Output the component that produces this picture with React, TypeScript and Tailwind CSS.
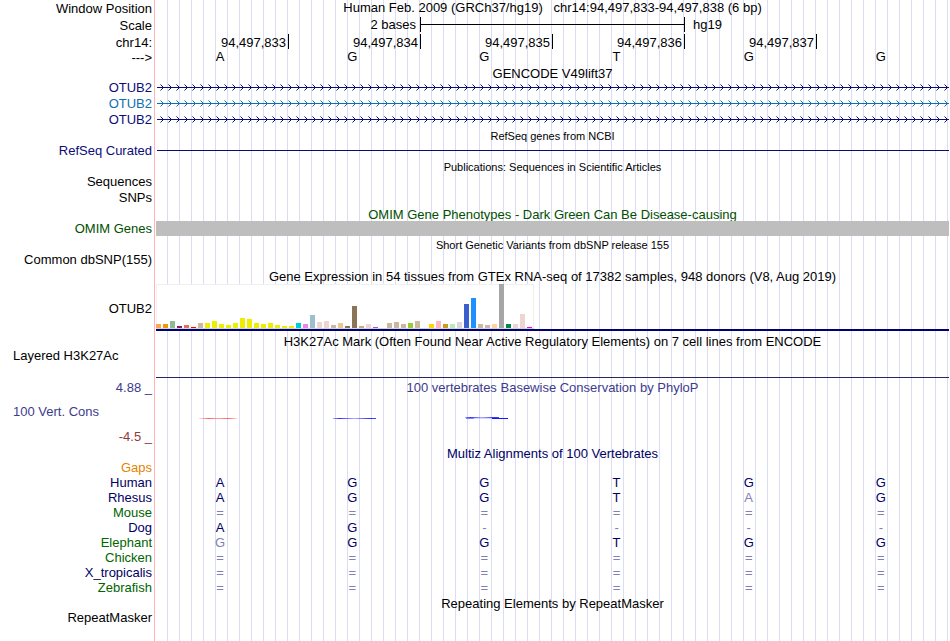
import type { ReactNode } from 'react'
import clsx from 'clsx'

interface TrackRowProps {
  label?: string
  className?: string
  labelClassName?: string
  children?: ReactNode
}

function TrackRow({ label, className = 'h-4 leading-4', labelClassName, children }: TrackRowProps) {
  return (
    <div className={clsx('flex', className)}>
      <div className={clsx('w-[156px] shrink-0 whitespace-nowrap pr-1 text-right', labelClassName)}>
        {label}
      </div>
      <div className="min-w-0 flex-1">{children}</div>
    </div>
  )
}

interface TrackTitleProps {
  className?: string
  children: ReactNode
}

function TrackTitle({ className = 'h-4 leading-[18px]', children }: TrackTitleProps) {
  return (
    <h2 className={clsx('ml-[156px] whitespace-pre text-center', className)}>{children}</h2>
  )
}

const positions = ['94,497,833', '94,497,834', '94,497,835', '94,497,836', '94,497,837', '']
const bases = ['A', 'G', 'G', 'T', 'G', 'G']

const transcripts = [
  { id: 'tx1', color: '#0c0c78', labelClassName: 'text-[#0c0c78]' },
  { id: 'tx2', color: '#0f6fb0', labelClassName: 'text-[#0f6fb0]' },
  { id: 'tx3', color: '#0c0c78', labelClassName: 'text-[#0c0c78]' },
]

function StrandArrows({ id, color }: { id: string; color: string }) {
  return (
    <svg className="block h-[15px] w-full" shapeRendering="crispEdges">
      <defs>
        <pattern id={id} x="4" width="8" height="15" patternUnits="userSpaceOnUse">
          <g fill={color}>
            <rect x="0" y="4" width="1" height="1" opacity="0.5" />
            <rect x="1" y="5" width="1" height="1" />
            <rect x="2" y="6" width="1" height="1" />
            <rect x="3" y="7" width="1" height="1" />
            <rect x="2" y="8" width="1" height="1" />
            <rect x="1" y="9" width="1" height="1" />
            <rect x="0" y="10" width="1" height="1" opacity="0.5" />
          </g>
        </pattern>
      </defs>
      <rect x="1" width="100%" height="15" fill={`url(#${id})`} />
      <rect x="1" y="7" width="100%" height="1" fill={color} />
    </svg>
  )
}

// [height in px, tissue color]
const tissues: [number, string][] = [
  [4, '#ffa54f'], [4, '#ee9a00'], [7, '#8fbc8f'], [2, '#8b1c62'], [3, '#ee6a50'], [1, '#ff0000'],
  [5, '#cdb79e'], [5, '#eeee00'], [7, '#eeee00'], [4, '#eeee00'], [3, '#eeee00'], [5, '#eeee00'],
  [10, '#eeee00'], [9, '#eeee00'], [5, '#eeee00'], [4, '#eeee00'], [5, '#eeee00'], [3, '#eeee00'],
  [2, '#eeee00'], [2, '#eeee00'], [5, '#00cdcd'], [4, '#ee82ee'], [13, '#9ac0cd'], [6, '#eed5d2'],
  [7, '#eed5d2'], [3, '#cdb79e'], [5, '#eec591'], [2, '#8b7355'], [22, '#8b7355'], [2, '#cdaa7d'],
  [4, '#eed5d2'], [1, '#b452cd'], [0, '#7a378b'], [5, '#cdb79e'], [6, '#cdb79e'], [4, '#cdb79e'],
  [5, '#9acd32'], [7, '#cdb79e'], [0, '#7a67ee'], [4, '#ffd700'], [7, '#ffb6c1'], [4, '#cd9b1d'],
  [4, '#b4eeb4'], [6, '#d9d9d9'], [24, '#3a5fcd'], [30, '#1e90ff'], [4, '#cdb79e'], [3, '#cdb79e'],
  [4, '#ffd39b'], [44, '#a6a6a6'], [4, '#008b45'], [4, '#eed5d2'], [14, '#eed5d2'], [1, '#ff00ff'],
]

function ExpressionChart() {
  return (
    <div className="h-[47px] border-b-2 border-[#000073]">
      <svg className="block h-[45px] w-[378px]" shapeRendering="crispEdges">
        <rect width="378" height="45" fill="#f0f0f0" />
        <rect x="1" y="1" width="376" height="43" fill="#ffffff" />
        <rect y="44" width="378" height="1" fill="#d4d4d4" />
        {tissues.map(([height, color], i) => (
          <rect key={i} x={i * 7} y={44 - height} width="5" height={height} fill={color} />
        ))}
      </svg>
    </div>
  )
}

function ConservationPlot() {
  return (
    <svg className="block h-4 w-full" viewBox="0 0 793 16" preserveAspectRatio="none">
      <defs>
        <linearGradient id="neg">
          <stop offset="0" stopColor="#ff6464" stopOpacity="0.2" />
          <stop offset="0.25" stopColor="#ff6464" />
          <stop offset="0.5" stopColor="#ff6464" stopOpacity="0.6" />
          <stop offset="0.75" stopColor="#ff6464" />
          <stop offset="1" stopColor="#ff6464" stopOpacity="0.1" />
        </linearGradient>
        <linearGradient id="pos">
          <stop offset="0" stopColor="#3232ff" stopOpacity="0.4" />
          <stop offset="0.15" stopColor="#3232ff" />
          <stop offset="0.5" stopColor="#3232ff" stopOpacity="0.4" />
          <stop offset="0.85" stopColor="#3232ff" />
          <stop offset="1" stopColor="#3232ff" stopOpacity="0.9" />
        </linearGradient>
      </defs>
      <rect x="43" y="8" width="39" height="1" fill="url(#neg)" />
      <rect x="177" y="8" width="43" height="1" fill="url(#pos)" />
      <rect x="309" y="7" width="34" height="1" fill="url(#pos)" />
      <rect x="310" y="8" width="8" height="1" fill="#3232ff" opacity="0.6" />
      <rect x="318" y="8" width="18" height="1" fill="#3232ff" opacity="0.2" />
      <rect x="336" y="8" width="16" height="1" fill="#1414ff" />
    </svg>
  )
}

const NAVY = 'text-[#000064]'
const GREEN = 'text-[#006400]'

// Lower-case letters mark a base that differs from the reference.
const alignments = [
  { species: 'Human', color: NAVY, seq: 'AGGTGG' },
  { species: 'Rhesus', color: NAVY, seq: 'AGGTaG' },
  { species: 'Mouse', color: GREEN, seq: '======' },
  { species: 'Dog', color: NAVY, seq: 'AG----' },
  { species: 'Elephant', color: GREEN, seq: 'gGGTGG' },
  { species: 'Chicken', color: GREEN, seq: '======' },
  { species: 'X_tropicalis', color: NAVY, seq: '======' },
  { species: 'Zebrafish', color: GREEN, seq: '======' },
]

function AlignmentTable() {
  return (
    <table className="w-full table-fixed border-collapse">
      <colgroup>
        <col className="w-[156px]" />
      </colgroup>
      <tbody>
        {alignments.map(({ species, color, seq }) => (
          <tr key={species} className="h-[15px] leading-[15px]">
            <th scope="row" className={clsx('p-0 pr-1 text-right font-normal', color)}>
              {species}
            </th>
            {seq.split('').map((base, i) => (
              <td
                key={i}
                className={clsx(
                  'p-0 pr-1 text-center',
                  /[A-Z]/.test(base) ? 'text-[#000064]' : 'text-[#8080b4]'
                )}
              >
                {base.toUpperCase()}
              </td>
            ))}
          </tr>
        ))}
      </tbody>
    </table>
  )
}

function GuideLines() {
  return (
    <div className="absolute inset-0 -z-10 flex" aria-hidden="true">
      <div className="mr-px w-[155px] shrink-0 border-r border-[#ffb4b4]" />
      <div className="flex-1 bg-[repeating-linear-gradient(to_right,transparent_0,transparent_11px,#dcdcf5_11px,#dcdcf5_12px)]" />
    </div>
  )
}

export default function App() {
  return (
    <main className="relative isolate min-h-screen overflow-hidden bg-white pb-4 pr-px font-['Liberation_Sans',Arial,sans-serif] text-[13px] text-black">
      <GuideLines />

      <TrackRow label="Window Position" className="h-[17px] leading-[17px]">
        <h1 className="whitespace-pre text-center leading-4">
          {'Human Feb. 2009 (GRCh37/hg19)   chr14:94,497,833-94,497,838 (6 bp)'}
        </h1>
      </TrackRow>
      <TrackRow label="Scale" className="h-[17px] leading-[17px]">
        <div className="grid grid-cols-6 pl-px">
          <span className="col-span-2 border-r border-black pr-1 text-right leading-[15px]">2 bases</span>
          <div className="col-span-2 border-r border-black pt-[7px]">
            <div className="h-px bg-black" />
          </div>
          <span className="pl-2 leading-[15px]">hg19</span>
        </div>
      </TrackRow>
      <TrackRow label="chr14:" className="h-4 leading-[18px]">
        <div className="grid grid-cols-6 pl-px">
          {positions.map((pos, i) => (
            <span
              key={i}
              className={clsx('h-[15px] pr-0.5 text-right', pos && 'border-r border-black')}
            >
              {pos}
            </span>
          ))}
        </div>
      </TrackRow>
      <TrackRow label="--->">
        <div className="grid grid-cols-6 leading-[14px]">
          {bases.map((base, i) => (
            <span key={i} className="pr-1 text-center">{base}</span>
          ))}
        </div>
      </TrackRow>

      <TrackTitle className="h-[14px] leading-4">GENCODE V49lift37</TrackTitle>
      {transcripts.map(({ id, color, labelClassName }) => (
        <TrackRow key={id} label="OTUB2" labelClassName={labelClassName}>
          <StrandArrows id={id} color={color} />
        </TrackRow>
      ))}

      <TrackTitle className="h-[15px] text-[11px] leading-[17px]">RefSeq genes from NCBI</TrackTitle>
      <TrackRow label="RefSeq Curated" labelClassName="text-[#0c0c78]">
        <div className="ml-px h-2 border-b border-[#0c0c78]" />
      </TrackRow>

      <TrackTitle className="h-[15px] text-[11px] leading-[17px]">
        Publications: Sequences in Scientific Articles
      </TrackTitle>
      <TrackRow label="Sequences" />
      <TrackRow label="SNPs" />

      <TrackTitle className="h-[15px] leading-[18px] text-[#005000]">
        OMIM Gene Phenotypes - Dark Green Can Be Disease-causing
      </TrackTitle>
      <TrackRow label="OMIM Genes" labelClassName="text-[#005000]">
        <div className="h-[15px] bg-[#bebebe]" />
      </TrackRow>

      <TrackTitle className="h-[15px] text-[11px] leading-[17px]">
        Short Genetic Variants from dbSNP release 155
      </TrackTitle>
      <TrackRow label="Common dbSNP(155)" />

      <TrackTitle>
        Gene Expression in 54 tissues from GTEx RNA-seq of 17382 samples, 948 donors (V8, Aug 2019)
      </TrackTitle>
      <TrackRow label="OTUB2" className="h-[50px] leading-[50px]">
        <ExpressionChart />
      </TrackRow>

      <TrackTitle className="h-4 leading-4">
        H3K27Ac Mark (Often Found Near Active Regulatory Elements) on 7 cell lines from ENCODE
      </TrackTitle>
      <div className="flex h-[30px] leading-3">
        <div className="w-[156px] shrink-0 pl-[13px]">Layered H3K27Ac</div>
        <div className="h-[28px] flex-1 border-b border-[#28285a]" />
      </div>

      <section className="h-[66px] text-[#3c3c8c]">
        <TrackRow label="4.88 _" className="h-[24px] leading-4">
          <h2 className="text-center">100 vertebrates Basewise Conservation by PhyloP</h2>
        </TrackRow>
        <div className="flex h-[25px] leading-4">
          <div className="w-[156px] shrink-0 pl-[13px]">100 Vert. Cons</div>
          <div className="flex-1 pt-[6px]">
            <ConservationPlot />
          </div>
        </div>
        <TrackRow label="-4.5 _" labelClassName="text-[#8c3c3c]" />
      </section>

      <TrackTitle className="h-[14px] leading-4 text-[#000064]">
        Multiz Alignments of 100 Vertebrates
      </TrackTitle>
      <TrackRow label="Gaps" className="h-[15px] leading-[15px]" labelClassName="text-[#e68200]" />
      <AlignmentTable />

      <TrackTitle>Repeating Elements by RepeatMasker</TrackTitle>
      <TrackRow label="RepeatMasker" className="h-[14px] leading-[14px]" />
    </main>
  )
}
